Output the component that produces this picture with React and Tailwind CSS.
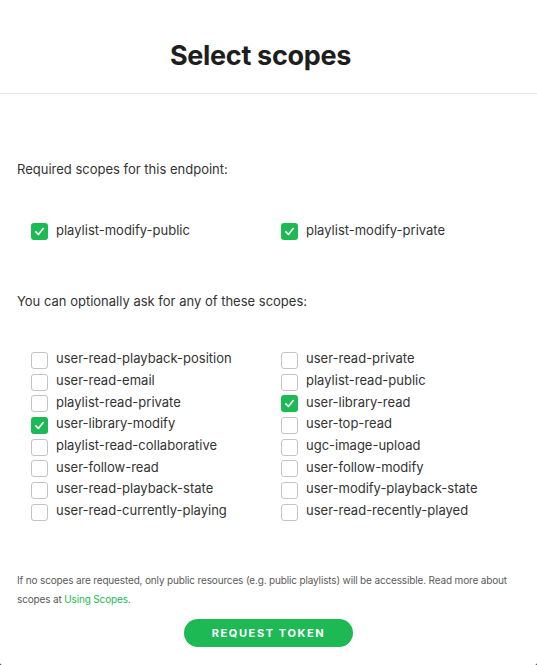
import React, { useState } from 'react';

const REQUIRED = ['playlist-modify-public', 'playlist-modify-private'];

const LEFT = [
  'user-read-playback-position',
  'user-read-email',
  'playlist-read-private',
  'user-library-modify',
  'playlist-read-collaborative',
  'user-follow-read',
  'user-read-playback-state',
  'user-read-currently-playing',
];

const RIGHT = [
  'user-read-private',
  'playlist-read-public',
  'user-library-read',
  'user-top-read',
  'ugc-image-upload',
  'user-follow-modify',
  'user-modify-playback-state',
  'user-read-recently-played',
];

const Check = ({ checked, onClick }) => (
  <button
    onClick={onClick}
    className={`w-[17px] h-[17px] shrink-0 rounded-[3px] flex items-center justify-center ${
      checked ? 'bg-[#1db954]' : 'bg-white border border-[#c4c4c4]'
    }`}
  >
    {checked && (
      <svg width="11" height="11" viewBox="0 0 12 12" fill="none">
        <path d="M2 6.5 L4.8 9.2 L10 2.8" stroke="white" strokeWidth="1.8" strokeLinecap="round" strokeLinejoin="round" />
      </svg>
    )}
  </button>
);

const ScopeItem = ({ name, checked, onToggle }) => (
  <label className="flex items-center gap-[8px] h-[21.7px] cursor-pointer">
    <Check checked={checked} onClick={onToggle} />
    <span className="text-[13px] text-[#333] -mt-[3px]">{name}</span>
  </label>
);

export default function App() {
  const [selected, setSelected] = useState({
    'user-library-modify': true,
    'user-library-read': true,
  });

  const toggle = (name) => setSelected((prev) => ({ ...prev, [name]: !prev[name] }));

  return (
    <div className="w-[537px] h-[665px] bg-[#121212]" style={{ fontFamily: 'Inter, "Noto Sans", sans-serif' }}>
      <div className="w-full h-full bg-white rounded-b-[2px] flex flex-col">
        {/* Header */}
        <div className="h-[94px] border-b border-[#e6e6e6] flex items-center justify-center pt-[20px] pr-[16px]">
          <h1 className="text-[27px] font-bold text-[#1e1e1e] tracking-[-0.3px]">Select scopes</h1>
        </div>

        <div className="px-[17px]">
          <p className="mt-[66px] text-[13px] text-[#333] leading-[18px]">Required scopes for this endpoint:</p>

          <div className="mt-[43px] grid grid-cols-[250px_1fr] pl-[14px]">
            {REQUIRED.map((s) => (
              <ScopeItem key={s} name={s} checked onToggle={() => {}} />
            ))}
          </div>

          <p className="mt-[49px] text-[13px] text-[#333] leading-[18px]">You can optionally ask for any of these scopes:</p>

          <div className="mt-[40px] grid grid-cols-[250px_1fr] pl-[14px]">
            <div className="flex flex-col">
              {LEFT.map((s) => (
                <ScopeItem key={s} name={s} checked={!!selected[s]} onToggle={() => toggle(s)} />
              ))}
            </div>
            <div className="flex flex-col">
              {RIGHT.map((s) => (
                <ScopeItem key={s} name={s} checked={!!selected[s]} onToggle={() => toggle(s)} />
              ))}
            </div>
          </div>

          <p className="mt-[48px] text-[10px] text-[#5a5a5a] leading-[19px] tracking-[-0.15px]">
            If no scopes are requested, only public resources (e.g. public playlists) will be accessible. Read more about
            scopes at <a className="text-[#1db954]">Using Scopes</a>.
          </p>

          <div className="mt-[10px] flex justify-center">
            <button className="w-[169px] h-[28px] rounded-full bg-[#1db954] text-white text-[11px] font-bold tracking-[1.6px]">
              REQUEST TOKEN
            </button>
          </div>
        </div>
      </div>
    </div>
  );
}
